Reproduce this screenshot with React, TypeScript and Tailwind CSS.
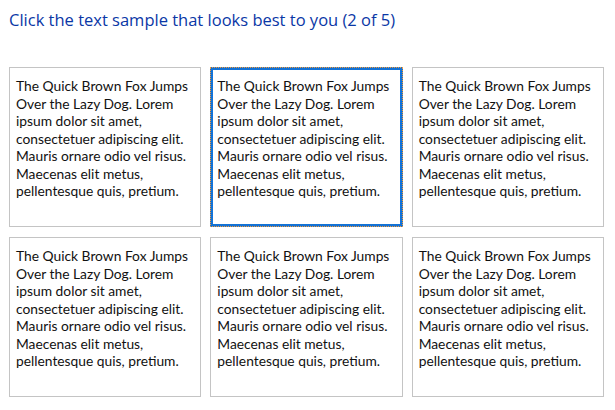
import React from "react";

const SAMPLE =
  "The Quick Brown Fox Jumps Over the Lazy Dog. Lorem ipsum dolor sit amet, consectetuer adipiscing elit. Mauris ornare odio vel risus. Maecenas elit metus, pellentesque quis, pretium.";

const LINES = [
  "The Quick Brown Fox Jumps",
  "Over the Lazy Dog. Lorem",
  "ipsum dolor sit amet,",
  "consectetuer adipiscing elit.",
  "Mauris ornare odio vel risus.",
  "Maecenas elit metus,",
  "pellentesque quis, pretium.",
];

function SampleText() {
  return (
    <div
      className="text-[13.8px] leading-[17.5px] text-[#111] whitespace-nowrap"
      style={{ fontFamily: "Lato, 'Open Sans', sans-serif" }}
      aria-label={SAMPLE}
    >
      {LINES.map((l, i) => (
        <div key={i}>{l}</div>
      ))}
    </div>
  );
}

function Box({ selected }: { selected?: boolean }) {
  if (selected) {
    return (
      <div className="h-[160px] bg-[#1572d4] border border-dotted border-[#f29a3a] p-[2px]">
        <div className="h-full bg-white pl-[4px] pt-[7px]">
          <SampleText />
        </div>
      </div>
    );
  }
  return (
    <div className="h-[160px] border border-[#c4c4c4] bg-white pl-[6px] pt-[9px]">
      <SampleText />
    </div>
  );
}

export default function App() {
  return (
    <div className="w-[615px] h-[410px] bg-white pl-[9px] pr-[11px]">
      <div
        className="pt-[9px] text-[16.5px] leading-[22px] text-[#0a37a6]"
        style={{ fontFamily: "'Open Sans', 'Noto Sans', sans-serif" }}
      >
        Click the text sample that looks best to you (2 of 5)
      </div>
      <div className="mt-[36px] grid grid-cols-3 gap-x-[9px] gap-y-[10px]">
        <Box />
        <Box selected />
        <Box />
        <Box />
        <Box />
        <Box />
      </div>
    </div>
  );
}
